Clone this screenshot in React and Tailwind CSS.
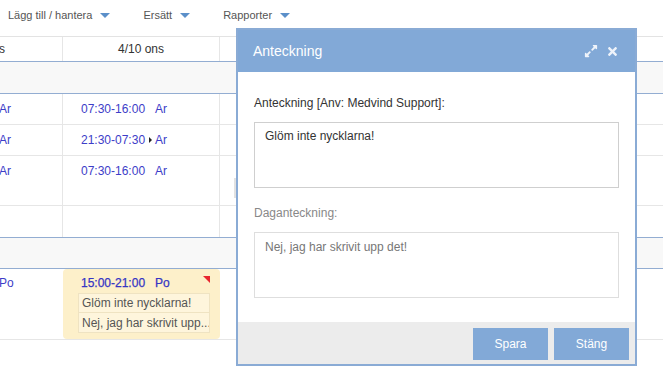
import React from "react";
import { FaExpandAlt, FaTimes } from "react-icons/fa";

const Caret = () => (
  <span className="inline-block w-0 h-0 border-x-[5px] border-x-transparent border-t-[5px] border-t-[#5b8fc9]" />
);

const MenuItem = ({ label }) => (
  <div className="flex items-center gap-[8px]">
    <span>{label}</span>
    <Caret />
  </div>
);

const Shift = ({ time, type, arrow, strong }) => (
  <div className={`flex items-center ${strong ? "text-[#3535c4] [-webkit-text-stroke:0.25px_#3535c4]" : "text-[#3d3dc8]"}`}>
    <span>{time}</span>
    <span className="w-[10px] flex justify-center">
      {arrow && (
        <span className="inline-block w-0 h-0 border-y-[3px] border-y-transparent border-l-[3px] border-l-[#222]" />
      )}
    </span>
    <span>{type}</span>
  </div>
);

const Row = ({ h, left, mid, right }) => (
  <div className={`grid grid-cols-[63px_157px_1fr] border-b border-[#e6e6e6] ${h}`}>
    <div className="border-r border-[#e6e6e6] pt-[8px] text-[#3d3dc8] -ml-[1px]">{left}</div>
    <div className="border-r border-[#e6e6e6] pt-[8px] pl-[18px]">{mid}</div>
    <div>{right}</div>
  </div>
);

const GroupRow = ({ h }) => <div className={`bg-[#f8f8f8] border-b border-[#93add2] ${h}`} />;

export default function App() {
  return (
    <div className="w-[663px] h-[381px] relative overflow-hidden bg-white font-['Liberation_Sans',Arial,sans-serif] text-[12px] leading-[14px]">
      {/* toolbar */}
      <div className="h-[36px] flex items-start pt-[8px] pl-[8px] gap-[33px] text-[11px] text-[#555]">
        <MenuItem label="Lägg till / hantera" />
        <MenuItem label="Ersätt" />
        <MenuItem label="Rapporter" />
      </div>

      {/* schedule */}
      <div className="grid grid-cols-[63px_157px_1fr] h-[26px] border-t border-[#e3e3e3] border-b border-b-[#93add2] text-[#333]">
        <div className="border-r border-[#e6e6e6] flex items-center -ml-[1px]">s</div>
        <div className="border-r border-[#e6e6e6] flex items-center justify-center">4/10 ons</div>
        <div />
      </div>
      <GroupRow h="h-[32px]" />
      <Row h="h-[31px]" left="Ar" mid={<Shift time="07:30-16:00" type="Ar" />} />
      <Row h="h-[31px]" left="Ar" mid={<Shift time="21:30-07:30" type="Ar" arrow />} />
      <Row
        h="h-[50px]"
        left="Ar"
        mid={<Shift time="07:30-16:00" type="Ar" />}
        right={<div className="ml-[14px] mt-[22px] w-[3px] h-[20px] bg-[#e2e2e2]" />}
      />
      <div className="grid grid-cols-[63px_157px_1fr] h-[32px] border-b border-[#93add2]">
        <div className="border-r border-[#e6e6e6]" />
        <div className="border-r border-[#e6e6e6]" />
        <div />
      </div>
      <GroupRow h="h-[31px]" />
      <div className="grid grid-cols-[63px_157px_1fr] h-[71px] border-b border-[#e6e6e6]">
        <div className="pt-[7px] text-[#3d3dc8] -ml-[1px]">Po</div>
        <div className="relative bg-[#fdf0ca] rounded-[4px] pt-[7px] pl-[15px] pr-[10px]">
          <div className="pl-[3px]">
            <Shift time="15:00-21:00" type="Po" strong />
          </div>
          <svg className="absolute top-[7px] right-[10px]" width="7" height="7" viewBox="0 0 7 7">
            <polygon points="0,0 7,0 7,7" fill="#e8262f" />
          </svg>
          <div className="mt-[3px] h-[20px] bg-[#fef5dc] border border-[#efe3c2] pl-[3px] flex items-center text-[#555]">
            Glöm inte nycklarna!
          </div>
          <div className="h-[20px] bg-[#fef5dc] border border-t-0 border-[#efe3c2] pl-[3px] flex items-center text-[#555] whitespace-nowrap overflow-hidden">
            Nej, jag har skrivit upp...
          </div>
        </div>
        <div />
      </div>

      {/* modal */}
      <div className="absolute left-[236px] top-[28px] w-[401px] border-2 border-[#8aabd5] bg-white">
        <div className="h-[42px] bg-[#82a9d7] flex items-center justify-between pl-[15px] pr-[16px]">
          <span className="text-[14px] text-white">Anteckning</span>
          <div className="flex items-center gap-[8px] text-[#eef3fa]">
            <FaExpandAlt size={14} />
            <FaTimes size={13} />
          </div>
        </div>
        <div className="pt-[24px] px-[16px] pb-[24px]">
          <div className="text-[#333] mb-[12px]">Anteckning [Anv: Medvind Support]:</div>
          <div className="h-[66px] border border-[#cfcfcf] px-[10px] pt-[6px] text-[#333]">Glöm inte nycklarna!</div>
          <div className="text-[#888] mt-[18px] mb-[12px]">Daganteckning:</div>
          <div className="h-[66px] border border-[#dedede] px-[10px] pt-[7px] text-[#777]">Nej, jag har skrivit upp det!</div>
        </div>
        <div className="h-[42px] bg-[#ececec] flex justify-end items-start pt-[6px] pr-[6px] gap-[6px]">
          <button className="w-[75px] h-[32px] bg-[#82a9d7] text-white text-[12px]">Spara</button>
          <button className="w-[75px] h-[32px] bg-[#82a9d7] text-white text-[12px]">Stäng</button>
        </div>
      </div>
    </div>
  );
}
